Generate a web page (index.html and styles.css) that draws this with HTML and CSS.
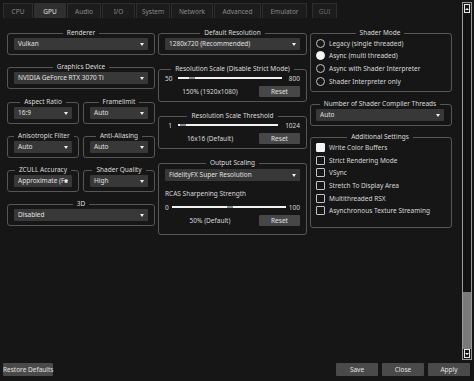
FILE: index.html
```html
<!DOCTYPE html>
<html lang="en">
<head>
    <meta charset="UTF-8">
    <title>Settings - GPU</title>
    <link rel="stylesheet" href="styles.css">
</head>
<body>
    <div class="window">
        <div class="upper">
            <div class="content">
                <div class="tabs">
                    <div class="tab tab-cpu">CPU</div>
                    <div class="tab tab-gpu tab-active">GPU</div>
                    <div class="tab tab-audio">Audio</div>
                    <div class="tab tab-io">I/O</div>
                    <div class="tab tab-system">System</div>
                    <div class="tab tab-network">Network</div>
                    <div class="tab tab-advanced">Advanced</div>
                    <div class="tab tab-emulator">Emulator</div>
                    <div class="tab tab-gui">GUI</div>
                </div>

                <div class="panel">
                    <div class="col col-left">
                        <div class="group">
                            <div class="group-title"><span>Renderer</span></div>
                            <div class="combo"><span class="combo-text">Vulkan</span></div>
                        </div>
                        <div class="group">
                            <div class="group-title"><span>Graphics Device</span></div>
                            <div class="combo"><span class="combo-text">NVIDIA GeForce RTX 3070 Ti</span></div>
                        </div>
                        <div class="pair">
                            <div class="group">
                                <div class="group-title"><span>Aspect Ratio</span></div>
                                <div class="combo"><span class="combo-text">16:9</span></div>
                            </div>
                            <div class="group">
                                <div class="group-title"><span>Framelimit</span></div>
                                <div class="combo"><span class="combo-text">Auto</span></div>
                            </div>
                        </div>
                        <div class="pair">
                            <div class="group">
                                <div class="group-title"><span>Anisotropic Filter</span></div>
                                <div class="combo"><span class="combo-text">Auto</span></div>
                            </div>
                            <div class="group">
                                <div class="group-title"><span>Anti-Aliasing</span></div>
                                <div class="combo"><span class="combo-text">Auto</span></div>
                            </div>
                        </div>
                        <div class="pair">
                            <div class="group">
                                <div class="group-title"><span>ZCULL Accuracy</span></div>
                                <div class="combo"><span class="combo-text">Approximate (Fa</span></div>
                            </div>
                            <div class="group">
                                <div class="group-title"><span>Shader Quality</span></div>
                                <div class="combo"><span class="combo-text">High</span></div>
                            </div>
                        </div>
                        <div class="group">
                            <div class="group-title"><span>3D</span></div>
                            <div class="combo"><span class="combo-text">Disabled</span></div>
                        </div>
                    </div>

                    <div class="col col-mid">
                        <div class="group">
                            <div class="group-title"><span>Default Resolution</span></div>
                            <div class="combo"><span class="combo-text">1280x720 (Recommended)</span></div>
                        </div>
                        <div class="group">
                            <div class="group-title"><span>Resolution Scale (Disable Strict Mode)</span></div>
                            <div class="slider-row">
                                <span class="slider-min">50</span>
                                <div class="slider"><div class="slider-handle handle-scale"></div></div>
                                <span class="slider-max">800</span>
                            </div>
                            <div class="value-row">
                                <span class="value-label">150% (1920x1080)</span>
                                <button class="btn btn-reset">Reset</button>
                            </div>
                        </div>
                        <div class="group">
                            <div class="group-title"><span>Resolution Scale Threshold</span></div>
                            <div class="slider-row">
                                <span class="slider-min">1</span>
                                <div class="slider"><div class="slider-handle handle-threshold"></div></div>
                                <span class="slider-max">1024</span>
                            </div>
                            <div class="value-row">
                                <span class="value-label">16x16 (Default)</span>
                                <button class="btn btn-reset">Reset</button>
                            </div>
                        </div>
                        <div class="group group-scaling">
                            <div class="group-title"><span>Output Scaling</span></div>
                            <div class="combo"><span class="combo-text">FidelityFX Super Resolution</span></div>
                            <div class="sub-label">RCAS Sharpening Strength</div>
                            <div class="slider-row slider-row-tight">
                                <span class="slider-min">0</span>
                                <div class="slider"><div class="slider-handle handle-rcas"></div></div>
                                <span class="slider-max">100</span>
                            </div>
                            <div class="value-row">
                                <span class="value-label">50% (Default)</span>
                                <button class="btn btn-reset">Reset</button>
                            </div>
                        </div>
                    </div>

                    <div class="col col-right">
                        <div class="group">
                            <div class="group-title"><span>Shader Mode</span></div>
                            <div class="option-list">
                                <div class="option"><span class="radio"></span>Legacy (single threaded)</div>
                                <div class="option"><span class="radio checked"></span>Async (multi threaded)</div>
                                <div class="option"><span class="radio"></span>Async with Shader Interpreter</div>
                                <div class="option"><span class="radio"></span>Shader Interpreter only</div>
                            </div>
                        </div>
                        <div class="group">
                            <div class="group-title"><span>Number of Shader Compiler Threads</span></div>
                            <div class="combo"><span class="combo-text">Auto</span></div>
                        </div>
                        <div class="group group-additional">
                            <div class="group-title"><span>Additional Settings</span></div>
                            <div class="option-list">
                                <div class="option"><span class="check checked"></span>Write Color Buffers</div>
                                <div class="option"><span class="check"></span>Strict Rendering Mode</div>
                                <div class="option"><span class="check"></span>VSync</div>
                                <div class="option"><span class="check"></span>Stretch To Display Area</div>
                                <div class="option"><span class="check"></span>Multithreaded RSX</div>
                                <div class="option"><span class="check"></span>Asynchronous Texture Streaming</div>
                            </div>
                        </div>
                    </div>
                </div>
            </div>

            <div class="scrollbar">
                <div class="sb-arrow"><span class="sb-up"></span></div>
                <div class="sb-track"></div>
                <div class="sb-thumb"></div>
                <div class="sb-arrow"><span class="sb-down"></span></div>
            </div>
        </div>

        <div class="footer">
            <button class="btn btn-footer btn-restore">Restore Defaults</button>
            <div class="footer-right">
                <button class="btn btn-footer">Save</button>
                <button class="btn btn-footer">Close</button>
                <button class="btn btn-footer">Apply</button>
            </div>
        </div>
    </div>
</body>
</html>
```

FILE: styles.css
```css
body {
    margin: 0;
    background: #161616;
    color: #d8d8d8;
    font-family: "Noto Sans", "Open Sans", sans-serif;
    font-size: 6.5px;
}

.window {
    width: 474px;
    height: 381px;
    display: flex;
    flex-direction: column;
    overflow: hidden;
}

.upper {
    height: 363px;
    display: flex;
}

.content {
    flex: 1;
}

/* tab bar */
.tabs {
    display: flex;
    padding: 3px 0 0 3px;
    height: 15px;
}

.tab {
    height: 15px;
    line-height: 15px;
    text-align: center;
    color: #8a8a8a;
    background: #1c1c1c;
    border: 1px solid #2e2e2e;
    border-bottom: none;
    box-sizing: border-box;
    margin-right: 1px;
}

.tab-active {
    background: #2f2f2f;
    color: #e6e6e6;
}

.tab-cpu { width: 30px; }
.tab-gpu { width: 32px; }
.tab-audio { width: 34px; }
.tab-io { width: 33px; }
.tab-system { width: 34px; }
.tab-network { width: 42px; }
.tab-advanced { width: 47px; }
.tab-emulator { width: 45px; }
.tab-gui { width: 25px; margin-left: 4px; color: #6a6a6a; }

/* settings columns */
.panel {
    display: flex;
    gap: 3px;
    padding: 15px 0 0 7px;
}

.col {
    display: flex;
    flex-direction: column;
}

.col-left {
    width: 148px;
    gap: 12.3px;
}

.col-mid {
    width: 149px;
    gap: 14px;
}

.col-right {
    width: 142px;
    gap: 11.5px;
}

.pair {
    display: flex;
    gap: 4px;
}

.pair .group {
    flex: 1;
    min-width: 0;
}

.group {
    border: 1px solid #565656;
    border-radius: 3px;
    padding: 0 6px 4px;
}

.group-title {
    text-align: center;
    line-height: 8px;
    height: 8px;
    margin-top: -5px;
    white-space: nowrap;
}

.group-title span {
    background: #161616;
    padding: 0 4px;
    color: #dcdcdc;
}

.col-right .group {
    padding: 0 7px 4px 5px;
}

.combo {
    position: relative;
    display: flex;
    height: 12px;
    line-height: 12px;
    margin-top: 1px;
    background: #383838;
    border-radius: 1px;
    padding: 0 4px 0 4px;
    color: #e0e0e0;
}

.combo-text {
    flex: 1;
    min-width: 0;
    white-space: nowrap;
}

.combo::after {
    content: "";
    position: absolute;
    right: 4px;
    top: 5px;
    border-left: 2.5px solid transparent;
    border-right: 2.5px solid transparent;
    border-top: 3px solid #f0f0f0;
}

/* sliders */
.slider-row {
    display: flex;
    align-items: center;
    height: 8px;
    margin-top: 1px;
}

.slider-min {
    min-width: 7px;
    text-align: right;
    margin-right: 6px;
}

.slider-max {
    margin-left: 7px;
}

.slider-row-tight .slider-min {
    min-width: 0;
    margin-right: 3px;
}

.slider-row-tight .slider-max {
    margin-left: 3px;
}

.slider {
    flex: 1;
    height: 2px;
    background: #f2f2f2;
    position: relative;
}

.slider-handle {
    position: absolute;
    top: 0;
    width: 6px;
    height: 2px;
    background: #8c8c8c;
}

.handle-scale { left: 11px; }
.handle-threshold { left: 2px; }
.handle-rcas { left: 55px; }

.value-row {
    display: flex;
    align-items: center;
    gap: 4px;
    margin-top: 4px;
}

.value-label {
    flex: 1;
    text-align: center;
}

.btn {
    font-family: inherit;
    font-size: 6.5px;
    color: #e0e0e0;
    background: #474747;
    border: none;
    border-radius: 1px;
    padding: 0;
    white-space: nowrap;
}

.btn-reset {
    width: 41px;
    height: 11px;
}

.sub-label {
    line-height: 8px;
    margin-top: 9px;
}

.group-scaling .combo {
    margin-top: 2px;
}

.group-scaling .slider-row {
    margin-top: 5px;
}

.group-scaling {
    padding-bottom: 8px;
}

/* radio and check options */
.option-list {
    display: flex;
    flex-direction: column;
}

.option {
    height: 12.6px;
    display: flex;
    align-items: center;
    gap: 4px;
    white-space: nowrap;
}

.radio,
.check {
    width: 9px;
    height: 9px;
    box-sizing: border-box;
    border: 1px solid #c4c4c4;
    flex-shrink: 0;
}

.radio {
    border-radius: 50%;
}

.check {
    border-radius: 1px;
}

.radio.checked,
.check.checked {
    background: #f4f4f4;
    border-color: #f4f4f4;
}

.col-right .group-additional {
    padding-bottom: 10px;
}

/* scrollbar */
.scrollbar {
    width: 10px;
    margin: 2px 2px 3px 10px;
    box-sizing: border-box;
    border: 1px solid #9a9a9a;
    display: flex;
    flex-direction: column;
    padding: 1px 0;
}

.sb-arrow {
    height: 7px;
    margin: 0 1px;
    border: 1px solid #e8e8e8;
    display: flex;
    align-items: center;
    justify-content: center;
}

.sb-up {
    border-left: 2px solid transparent;
    border-right: 2px solid transparent;
    border-bottom: 2px solid #f0f0f0;
}

.sb-down {
    border-left: 2px solid transparent;
    border-right: 2px solid transparent;
    border-top: 2px solid #f0f0f0;
}

.sb-track {
    flex: 1;
    background: #121212;
}

.sb-thumb {
    height: 57px;
    background: #7a7a7a;
}

/* footer */
.footer {
    display: flex;
    justify-content: space-between;
    padding: 0 4px 0 3px;
}

.btn-footer {
    height: 13px;
    width: 42px;
    background: #4a4a4a;
}

.btn-restore {
    width: 50px;
}

.footer-right {
    display: flex;
    gap: 4px;
}
```
